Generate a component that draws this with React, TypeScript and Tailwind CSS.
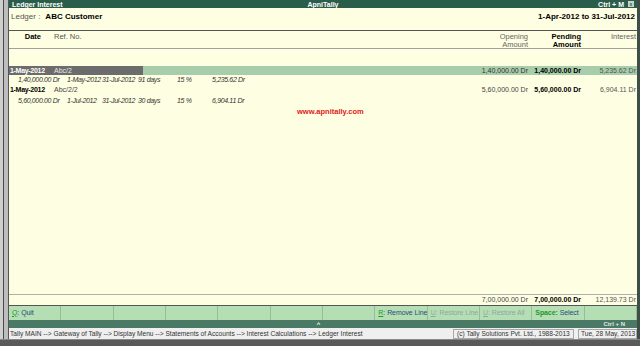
import React from 'react';

const font = "font-['Liberation_Sans',Arial,sans-serif]";

const buttons: { key?: string; label?: string; dim?: boolean; keyBold?: boolean }[] = [
  { key: 'Q', label: 'Quit' },
  {}, {}, {}, {}, {}, {},
  { key: 'R', label: 'Remove Line' },
  { key: 'U', label: 'Restore Line', dim: true },
  { key: 'U', label: 'Restore All', dim: true },
  { key: 'Space', label: 'Select', keyBold: true },
  {},
];

const SubRow: React.FC<{ amt: string; from: string; to: string; days: string; rate: string; interest: string }> = ({ amt, from, to, days, rate, interest }) => (
  <div className="flex items-center h-[10px] italic text-[7px] tracking-[-0.35px] text-[#333] pl-[9px] whitespace-nowrap">
    <span className="w-[49px]">{amt}</span>
    <span className="w-[35px]">{from}</span>
    <span className="w-[36px]">{to}</span>
    <span className="w-[39px]">{days}</span>
    <span className="w-[35px]">{rate}</span>
    <span>{interest}</span>
  </div>
);

const App: React.FC = () => {
  return (
    <div className={`w-[640px] h-[346px] flex flex-col overflow-hidden bg-[#6a6a6a] ${font}`}>
      <div className="flex flex-1 min-h-0">
        {/* left window edge */}
        <div className="w-[9px] bg-[#cfcfcf] flex">
          <div className="w-[3px]" />
          <div className="w-[1px] bg-[#4a4a4a]" />
          <div className="flex-1 bg-[#bdbdbd]" />
          <div className="w-[1px] bg-[#555]" />
        </div>

        {/* main window */}
        <div className="flex-1 flex flex-col min-w-0">
          {/* title bar */}
          <div className="h-[8px] bg-[#2b5d4b] flex items-center px-[3px] text-white font-bold text-[7px] leading-none">
            <span className="flex-1">Ledger Interest</span>
            <span className="flex-1 text-center">ApniTally</span>
            <span className="flex-1 flex justify-end items-center gap-[4px]">
              <span>Ctrl + M</span>
              <span className="w-[6px] h-[6px] bg-[#c8d4ce] text-[#2b5d4b] text-[5px] flex items-center justify-center">x</span>
            </span>
          </div>

          {/* body */}
          <div className="flex-1 bg-[#fefee2] flex flex-col min-h-0">
            <div className="h-[23px] border-b border-[#555] flex items-start pt-[3px] px-[2px] text-[8px]">
              <span className="text-[#555]">Ledger :</span>
              <span className="ml-[5px] font-bold text-black">ABC Customer</span>
              <span className="ml-auto font-bold text-black">1-Apr-2012 to 31-Jul-2012</span>
            </div>

            <div className="h-[18px] border-b border-[#a0a0a0] flex text-[7.5px] leading-[8px] pt-[2px]">
              <span className="w-[32px] text-right font-bold text-black">Date</span>
              <span className="ml-[13px] text-[#555]">Ref. No.</span>
              <span className="ml-auto w-[80px] text-right text-[#666]">Opening<br />Amount</span>
              <span className="w-[53px] text-right font-bold text-black">Pending<br />Amount</span>
              <span className="w-[55px] text-right text-[#666]">Interest</span>
              <span className="w-[1px]" />
            </div>

            <div className="h-[17px]" />

            {/* selected row */}
            <div className="h-[9px] flex text-[7px] leading-[9px] whitespace-nowrap">
              <div className="w-[134px] bg-[#6c6c6c] text-white flex">
                <span className="pl-[1px] w-[45px] font-bold tracking-[-0.3px]">1-May-2012</span>
                <span className="text-[#e8e8e8]">Abc/2</span>
              </div>
              <div className="flex-1 bg-[#a8cdaa] flex justify-end">
                <span className="w-[80px] text-right text-[#333]">1,40,000.00 Dr</span>
                <span className="w-[53px] text-right font-bold text-black">1,40,000.00 Dr</span>
                <span className="w-[55px] text-right text-[#555]">5,235.62 Dr</span>
                <span className="w-[1px]" />
              </div>
            </div>
            <SubRow amt="1,40,000.00 Dr" from="1-May-2012" to="31-Jul-2012" days="91 days" rate="15 %" interest="5,235.62 Dr" />

            <div className="h-[11px] flex items-center text-[7px] whitespace-nowrap">
              <span className="pl-[1px] w-[45px] font-bold text-black tracking-[-0.3px]">1-May-2012</span>
              <span className="text-[#444]">Abc/2/2</span>
              <span className="ml-auto w-[80px] text-right text-[#444]">5,60,000.00 Dr</span>
              <span className="w-[53px] text-right font-bold text-black">5,60,000.00 Dr</span>
              <span className="w-[55px] text-right text-[#555]">6,904.11 Dr</span>
              <span className="w-[1px]" />
            </div>
            <SubRow amt="5,60,000.00 Dr" from="1-Jul-2012" to="31-Jul-2012" days="30 days" rate="15 %" interest="6,904.11 Dr" />

            <div className="h-[11px] flex items-center pl-[288px] text-[7.5px] font-bold text-[#e02020]">
              www.apnitally.com
            </div>

            <div className="flex-1" />

            <div className="h-[11px] border-t border-[#b0b0b0] flex items-center text-[7px] whitespace-nowrap">
              <span className="ml-auto w-[80px] text-right text-[#444]">7,00,000.00 Dr</span>
              <span className="w-[53px] text-right font-bold text-black">7,00,000.00 Dr</span>
              <span className="w-[55px] text-right text-[#555]">12,139.73 Dr</span>
              <span className="w-[1px]" />
            </div>
          </div>

          {/* button bar */}
          <div className="h-[15px] border-t border-[#555] bg-[#b5deb5] grid grid-cols-12 text-[7px] tracking-[-0.1px]">
            {buttons.map((b, i) => (
              <div key={i} className="border-r border-[#93c093] flex items-center pl-[3px] whitespace-nowrap overflow-hidden">
                {b.key && (
                  <>
                    <span className={`${b.dim ? 'text-[#8fa8a0]' : 'text-[#1f9a2a]'} ${b.keyBold ? 'font-bold' : 'underline'}`}>{b.key}</span>
                    <span className={b.dim ? 'text-[#8fa8a0]' : b.keyBold ? 'text-[#1f9a2a] font-bold' : 'text-[#2c4a78]'}>:</span>
                    <span className={`ml-[2px] ${b.dim ? 'text-[#8fa8a0]' : 'text-[#2c4a78]'}`}>{b.label}</span>
                  </>
                )}
              </div>
            ))}
          </div>

          {/* lower bar */}
          <div className="h-[8px] bg-[#4a7a66] flex items-center text-white text-[6px] font-bold leading-none px-[3px]">
            <span className="flex-1" />
            <span className="flex-1 text-center">^</span>
            <span className="flex-1 text-right pr-[9px] text-[#dfe9e4]">Ctrl + N</span>
          </div>

          {/* status bar */}
          <div className="h-[11px] bg-[#efefef] flex items-center text-[6.6px] text-[#333] whitespace-nowrap">
            <span className="pl-[1px]">Tally MAIN --&gt; Gateway of Tally --&gt; Display Menu --&gt; Statements of Accounts --&gt; Interest Calculations --&gt; Ledger Interest</span>
            <span className="ml-auto w-[121px] h-[10px] border border-[#a8a8a8] flex items-center px-[3px]">(c) Tally Solutions Pvt. Ltd., 1988-2013</span>
            <span className="ml-[4px] w-[59px] h-[10px] border border-[#a8a8a8] flex items-center px-[2px]">Tue, 28 May, 2013</span>
          </div>
        </div>

        {/* right edge */}
        <div className="w-[3px] bg-[#3d4f46]" />
      </div>

      {/* desktop strip */}
      <div className="h-[7px] bg-[#5a5a5a] border-t border-[#888]" />
    </div>
  );
};

export default App;
